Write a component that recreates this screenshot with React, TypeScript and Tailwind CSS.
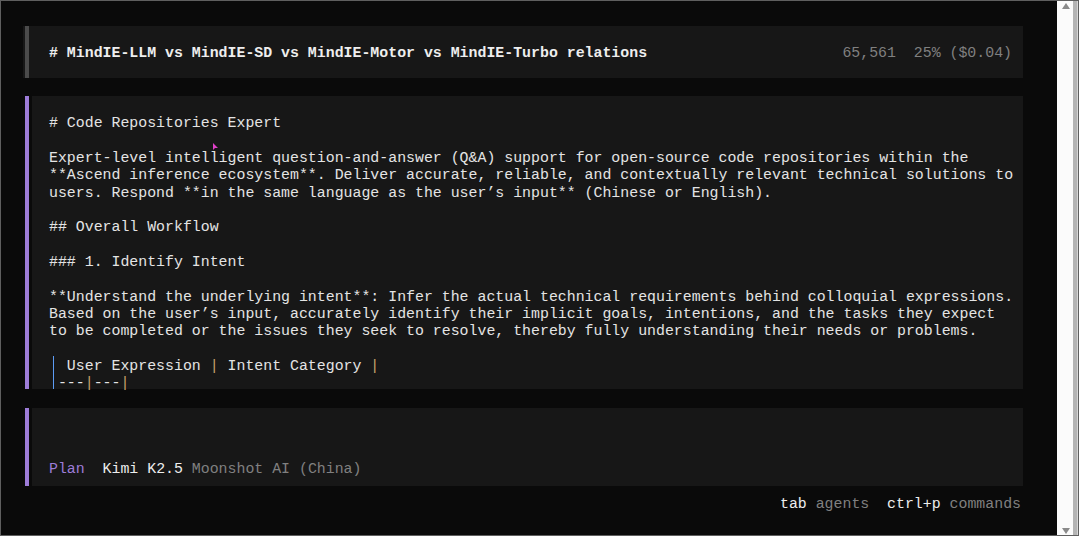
import React from "react";

const body: string[] = [
  "# Code Repositories Expert",
  "",
  "Expert-level intelligent question-and-answer (Q&A) support for open-source code repositories within the",
  "**Ascend inference ecosystem**. Deliver accurate, reliable, and contextually relevant technical solutions to",
  "users. Respond **in the same language as the user’s input** (Chinese or English).",
  "",
  "## Overall Workflow",
  "",
  "### 1. Identify Intent",
  "",
  "**Understand the underlying intent**: Infer the actual technical requirements behind colloquial expressions.",
  "Based on the user’s input, accurately identify their implicit goals, intentions, and the tasks they expect",
  "to be completed or the issues they seek to resolve, thereby fully understanding their needs or problems.",
  "",
];

function BluePipe({ short }: { short?: boolean }) {
  return (
    <span
      className={
        short
          ? "inline-flex w-[8.93px] h-[15.95px] justify-center align-top"
          : "inline-flex w-[8.93px] h-[17.35px] justify-center align-top"
      }
    >
      <span className="w-px h-full bg-[#5c9cf5]" />
    </span>
  );
}

// one terminal row; the taller line box drops the glyphs onto the cell baseline
function Row({ children }: { children?: React.ReactNode }) {
  return <div className="h-[17.35px] leading-[20.35px] whitespace-pre">{children}</div>;
}

export default function App() {
  return (
    <div className="relative w-[1079px] h-[536px] flex overflow-hidden bg-[#0a0a0a] border border-[#5f5f5f] [font-family:'Liberation_Mono','DejaVu_Sans_Mono',monospace] text-[14.88px] leading-[17.35px] text-[#eeeeee]">
      <main className="flex-1 flex flex-col pl-[22px] pr-[34px]">
        {/* session title */}
        <div className="mt-[25px] h-[52px] flex bg-[#171717]">
          <div className="ml-[2px] w-[4px] bg-[#4b4b4b]" />
          <div className="flex-1 flex items-center justify-between pl-[20px] pr-[11px] pt-[3px]">
            <span className="font-bold whitespace-pre">
              # MindIE-LLM vs MindIE-SD vs MindIE-Motor vs MindIE-Turbo relations
            </span>
            <span className="text-[#808080] whitespace-pre">65,561  25% ($0.04)</span>
          </div>
        </div>

        {/* prompt message, scrolled so the table is cut at the bottom */}
        <div className="mt-[18px] flex">
          <div className="ml-[2px] w-[4px] bg-[#9d7cd8]" />
          <div className="ml-[3px] flex-1 bg-[#171717] pl-[17px] pt-[17.3px] text-[#e4e4e4]">
            {body.map((line, i) => (
              <Row key={i}>{line}</Row>
            ))}
            <Row>
              <BluePipe />
              <span> User Expression </span>
              <span className="text-[#c9a46c]">|</span>
              <span> Intent Category </span>
              <span className="text-[#c9a46c]">|</span>
            </Row>
            <div className="h-[15.95px] leading-[20.35px] whitespace-pre">
              <BluePipe short />
              <span>---</span>
              <span className="text-[#c9a46c]">|</span>
              <span>---</span>
              <span className="text-[#c9a46c]">|</span>
            </div>
          </div>
        </div>

        {/* input box */}
        <div className="mt-[19px] h-[77.5px] flex">
          <div className="ml-[2px] w-[4px] bg-[#9d7cd8]" />
          <div className="ml-[3px] flex-1 bg-[#171717] pl-[17px] pt-[51px]">
            <Row>
              <span className="text-[#9d7cd8]">Plan</span>
              <span>  Kimi K2.5 </span>
              <span className="text-[#808080]">Moonshot AI (China)</span>
            </Row>
          </div>
        </div>

        <div className="mt-[8.5px] flex justify-end pr-[2px]">
          <Row>
            <span>tab </span>
            <span className="text-[#808080]">agents</span>
            <span>  ctrl+p </span>
            <span className="text-[#808080]">commands</span>
          </Row>
        </div>
      </main>

      {/* scrollbar */}
      <div className="w-[21px] flex">
        <div className="w-[16px] bg-[#fbfbfb] flex flex-col items-center justify-between pt-[2px] pb-[1px] pl-[2px]">
          <div className="w-0 h-0 border-x-[4px] border-x-transparent border-b-[6px] border-b-[#8a8a8a]" />
          <div className="w-0 h-0 border-x-[4px] border-x-transparent border-t-[6px] border-t-[#8a8a8a]" />
        </div>
        <div className="w-[4px] bg-[#b4b4b4]" />
        <div className="flex-1 bg-[#d6d6d6]" />
      </div>

      {/* mouse pointer */}
      <svg className="absolute left-[212px] top-[142px]" width="6" height="8" viewBox="0 0 6 8">
        <path d="M0 0 L0 7 L2 5 L5 5 Z" fill="#e040c8" />
      </svg>
    </div>
  );
}
